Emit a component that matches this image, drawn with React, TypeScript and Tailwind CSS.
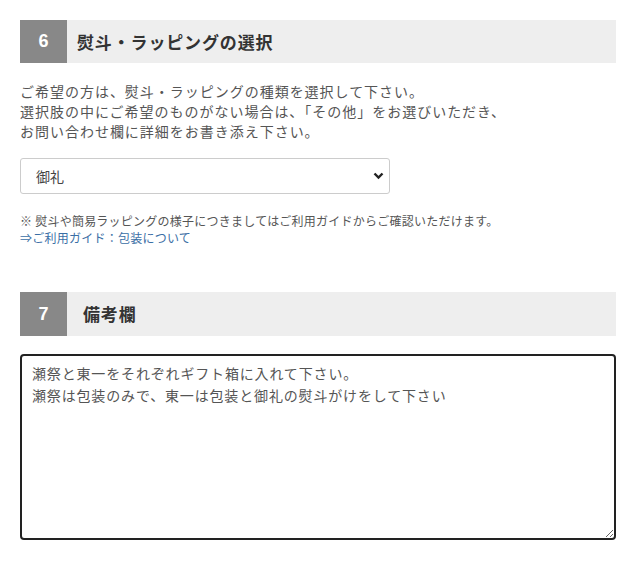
export default function App() {
  const font = { fontFamily: '"Noto Sans CJK JP", "Noto Sans", sans-serif' }

  return (
    <div className="bg-white w-[640px] h-[569px] pl-[20px] pr-[24px] pt-[20px] text-[#444]" style={font}>
      <div className="flex h-[43px] bg-[#eeeeee]">
        <div className="w-[47px] bg-[#888888] text-white font-bold text-[18px] flex items-center justify-center" style={{ fontFamily: '"Liberation Sans", sans-serif' }}>6</div>
        <div className="pl-[10px] flex items-center font-bold text-[17px] tracking-[0.05em] text-[#333]">熨斗・ラッピングの選択</div>
      </div>

      <p className="mt-[18px] text-[14px] leading-[20px] tracking-[0.07em] text-[#555]">
        ご希望の方は、熨斗・ラッピングの種類を選択して下さい。<br />
        選択肢の中にご希望のものがない場合は、「その他」をお選びいただき、<br />
        お問い合わせ欄に詳細をお書き添え下さい。
      </p>

      <div className="relative mt-[17px] w-[370px]">
        <select
          defaultValue="御礼"
          className="appearance-none w-full h-[36px] border border-[#cccccc] rounded-[3px] bg-white pl-[15px] text-[14px] text-[#444] outline-none"
          style={font}
        >
          <option>御礼</option>
          <option>御祝</option>
          <option>その他</option>
        </select>
        <svg className="absolute right-[6px] top-[14px] pointer-events-none" width="11" height="8" viewBox="0 0 11 8">
          <path d="M1.5 1.5 L5.5 5.5 L9.5 1.5" fill="none" stroke="#222" strokeWidth="2.4" />
        </svg>
      </div>

      <div className="mt-[18px] text-[12px] leading-[17px] tracking-[0.02em] text-[#555]">
        <div>※ 熨斗や簡易ラッピングの様子につきましてはご利用ガイドからご確認いただけます。</div>
        <a href="#" className="text-[#3a6ea5]">⇒ご利用ガイド：包装について</a>
      </div>

      <div className="mt-[46px] flex h-[44px] bg-[#eeeeee]">
        <div className="w-[47px] bg-[#888888] text-white font-bold text-[18px] flex items-center justify-center" style={{ fontFamily: '"Liberation Sans", sans-serif' }}>7</div>
        <div className="pl-[16px] flex items-center font-bold text-[17px] tracking-[0.05em] text-[#333]">備考欄</div>
      </div>

      <textarea
        className="mt-[18px] block w-full h-[186px] border-2 border-[#222] rounded-[4px] px-[10px] py-[6px] text-[14px] leading-[22px] tracking-[0.06em] text-[#555] outline-none"
        style={font}
        defaultValue={'瀬祭と東一をそれぞれギフト箱に入れて下さい。\n瀬祭は包装のみで、東一は包装と御礼の熨斗がけをして下さい'}
      />
    </div>
  )
}
